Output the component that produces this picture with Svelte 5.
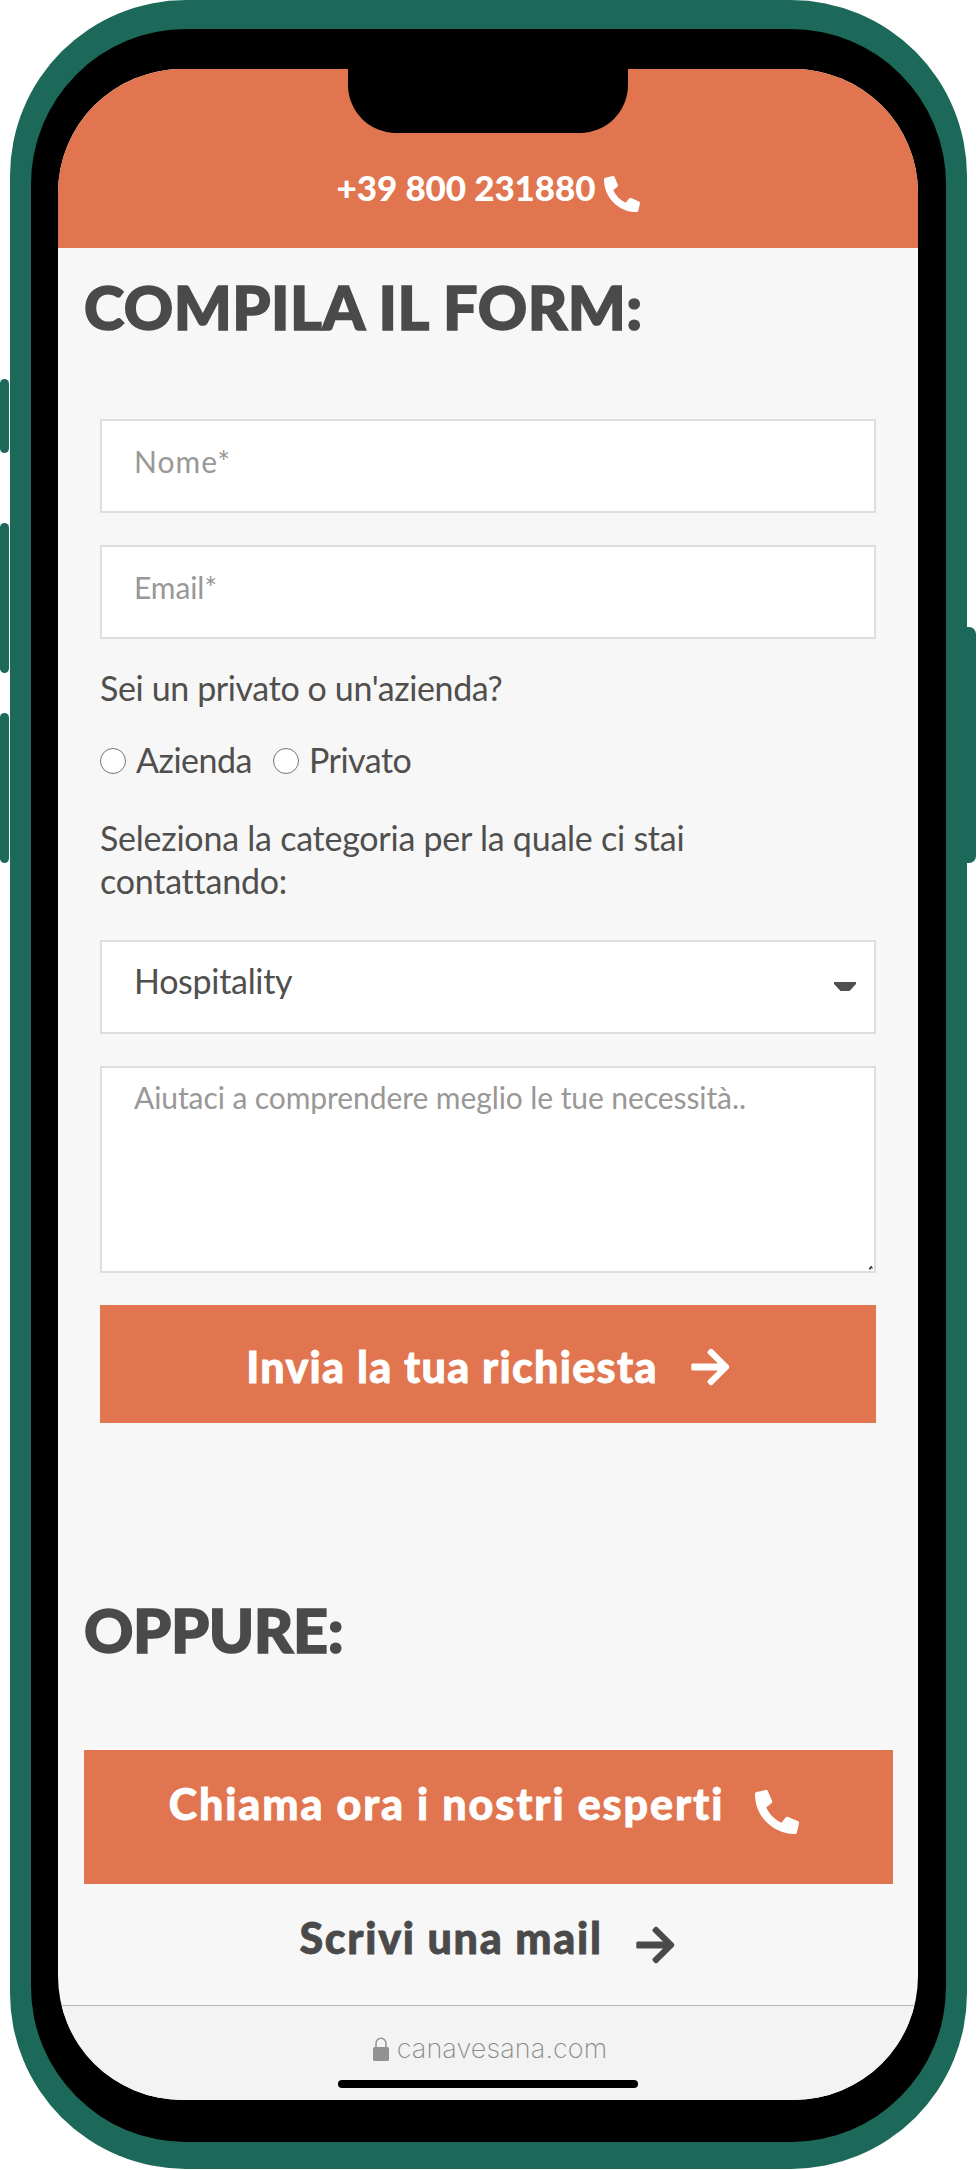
<script lang="ts">
	const options = ['Azienda', 'Privato'];
	const keys = ['mute', 'volume-up', 'volume-down', 'power'];

	let kind = '';
	let category = 'Hospitality';
</script>

<svelte:head>
	<title>Canavesana</title>
</svelte:head>

<svg class="sprite" aria-hidden="true">
	<symbol id="phone" viewBox="0 0 512 512">
		<path
			transform="translate(512 0) scale(-1 1)"
			d="M493.4 24.6l-104-24c-11.3-2.6-22.9 3.3-27.5 13.9l-48 112c-4.2 9.8-1.4 21.3 6.9 28l60.6 49.6c-36 76.7-98.9 140.5-177.2 177.2l-49.6-60.6c-6.8-8.3-18.2-11.1-28-6.9l-112 48C3.9 366.5-2 378.1.6 389.4l24 104C27.1 504.2 36.7 512 48 512c256.1 0 464-207.5 464-464 0-11.2-7.7-20.9-18.6-23.4z"
		/>
	</symbol>
	<symbol id="arrow" viewBox="0 0 39 38">
		<path
			d="M1.5 15.5H27L16.8 5.5Q15.8 4.3 16.8 3.2L18.8 1.1Q20 .2 21.2 1.1L37.8 17.6Q39 19 37.8 20.4L21.2 36.9Q20 37.8 18.8 36.9L16.8 34.8Q15.8 33.7 16.8 32.5L27 22.5H1.5Q.3 22.5 .3 21V17Q.3 15.5 1.5 15.5Z"
			fill="currentColor"
		/>
	</symbol>
</svg>

<div class="device">
	{#each keys as key}
		<i class="key {key}"></i>
	{/each}

	<div class="bezel">
		<div class="notch"></div>

		<div class="screen">
			<header>
				<a href="tel:+39800231880">+39 800 231880</a>
				<svg class="icon"><use href="#phone" /></svg>
			</header>

			<main>
				<h2>COMPILA IL FORM:</h2>

				<form on:submit|preventDefault>
					<input class="name" type="text" placeholder="Nome*" />
					<input type="text" placeholder="Email*" />

					<p class="question">Sei un privato o un'azienda?</p>
					<div class="radios">
						{#each options as option}
							<label>
								<input type="radio" name="kind" value={option} bind:group={kind} />
								<span>{option}</span>
							</label>
						{/each}
					</div>

					<p class="category">Seleziona la categoria per la quale ci stai contattando:</p>
					<div class="select">
						<select bind:value={category}>
							<option>Hospitality</option>
						</select>
						<svg class="caret" viewBox="0 0 22 9"><path d="M0 0H22V2L15.5 9H6.5L0 2Z" /></svg>
					</div>

					<div class="message">
						<textarea placeholder="Aiutaci a comprendere meglio le tue necessità.."></textarea>
						<svg class="grip" viewBox="0 0 4 4"><path d="M2 0H3V1.5H4V2.5H2V3.5H0V2Z" /></svg>
					</div>

					<button class="submit">
						<span>Invia la tua richiesta</span>
						<svg class="arrow"><use href="#arrow" /></svg>
					</button>
				</form>

				<h2 class="or">OPPURE:</h2>

				<a class="call" href="tel:+39800231880">
					<span>Chiama ora i nostri esperti</span>
					<svg class="icon"><use href="#phone" /></svg>
				</a>
				<a class="mail" href="mailto:">
					<span>Scrivi una mail</span>
					<svg class="arrow"><use href="#arrow" /></svg>
				</a>
			</main>

			<footer>
				<div class="address">
					<svg class="lock" viewBox="0 0 16 24">
						<path d="M3 11V6.5a5 5.3 0 0 1 10 0V11" fill="none" stroke="#929292" stroke-width="1.5" />
						<rect y="10" width="16" height="14" rx="1.6" fill="#929292" />
					</svg>
					<span>canavesana.com</span>
				</div>
				<div class="home"></div>
			</footer>
		</div>
	</div>
</div>

<style>
	:global(body) {
		margin: 0;
		background: #fff;
	}

	* {
		box-sizing: border-box;
	}

	.sprite {
		position: absolute;
		width: 0;
		height: 0;
	}

	.device {
		--orange: #e07550;
		--green: #1c6859;
		--dark: #4a4a4a;

		position: relative;
		width: 957px;
		height: 2169px;
		margin-left: 10px;
		padding: 29px 21px 27px;
		border-radius: 176px;
		background: var(--green);
		font-family: Lato, 'Open Sans', sans-serif;
		color: #504f4d;
	}

	.key {
		position: absolute;
		left: -10px;
		width: 9px;
		border-radius: 5px;
		background: var(--green);
	}

	.mute {
		top: 379px;
		height: 74px;
	}

	.volume-up {
		top: 523px;
		height: 150px;
	}

	.volume-down {
		top: 713px;
		height: 150px;
	}

	.power {
		top: 627px;
		left: auto;
		right: -9px;
		width: 12px;
		height: 236px;
		border-radius: 0 7px 7px 0;
	}

	.bezel {
		position: relative;
		height: 100%;
		padding: 40px 28px 42px 27px;
		border-radius: 155px;
		background: #000;
	}

	.notch {
		position: absolute;
		top: 39px;
		left: 317px;
		width: 280px;
		height: 65px;
		border-radius: 0 0 48px 48px;
		background: #000;
	}

	.screen {
		display: flex;
		flex-direction: column;
		height: 100%;
		border-radius: 124px;
		background: #f7f7f7;
		overflow: hidden;
	}

	header {
		display: flex;
		justify-content: center;
		gap: 9px;
		height: 179px;
		padding: 98px 0 0 1px;
		background: var(--orange);
		font-size: 35px;
		font-weight: 900;
		line-height: 40px;
		color: #fff;
	}

	header a {
		letter-spacing: -0.1px;
		color: inherit;
		text-decoration: none;
	}

	.icon {
		width: 36px;
		height: 36px;
		margin-top: 9px;
		fill: #fff;
	}

	main {
		display: flex;
		flex-direction: column;
		padding: 23px 25px 0 26px;
	}

	h2 {
		margin: 0 0 76px;
		font-size: 61px;
		font-weight: 900;
		line-height: 72px;
		letter-spacing: 0.5px;
		color: var(--dark);
		-webkit-text-stroke: 1.6px var(--dark);
	}

	form {
		display: flex;
		flex-direction: column;
		margin: 0 17px 0 16px;
	}

	input[type='text'],
	select,
	textarea {
		display: block;
		width: 100%;
		height: 94px;
		margin: 0;
		padding: 0 32px 11px;
		border: 2px solid #dedede;
		border-radius: 0;
		outline: none;
		background: #fff;
		font: 30px/36px Lato, 'Open Sans', sans-serif;
		letter-spacing: -0.08px;
		color: #504f4d;
	}

	input[type='text'] + input[type='text'] {
		margin-top: 32px;
	}

	input.name {
		letter-spacing: 1px;
	}

	::placeholder {
		color: #999896;
		opacity: 1;
	}

	p {
		margin: 0;
		font-size: 34px;
		line-height: 43px;
		letter-spacing: -0.24px;
	}

	.question {
		margin-top: 27px;
		letter-spacing: -0.38px;
	}

	.radios {
		display: flex;
		gap: 21px;
		height: 42px;
		margin: 31px 0 34px;
	}

	.radios label {
		display: flex;
		align-items: center;
		gap: 10px;
		font-size: 34px;
		line-height: 40px;
		letter-spacing: -0.5px;
	}

	.radios span {
		margin-top: -2px;
	}

	input[type='radio'] {
		appearance: none;
		width: 26px;
		height: 26px;
		margin: 0;
		border: 1.5px solid #767676;
		border-radius: 50%;
		background: #fff;
	}

	input[type='radio']:checked {
		border-width: 8px;
	}

	.category {
		width: 640px;
	}

	.select,
	.message {
		position: relative;
	}

	.select {
		margin-top: 38px;
	}

	select {
		appearance: none;
		padding-bottom: 12px;
		font-size: 34px;
		letter-spacing: -0.3px;
	}

	.caret {
		position: absolute;
		top: 42px;
		right: 20px;
		width: 22px;
		height: 9px;
		fill: #504f4d;
	}

	.message {
		margin: 32px 0;
	}

	textarea {
		height: 207px;
		padding-top: 11px;
		resize: none;
	}

	.grip {
		position: absolute;
		right: 3px;
		bottom: 3px;
		width: 4px;
		height: 4px;
		fill: #444;
	}

	.submit,
	.call,
	.mail {
		display: flex;
		align-items: center;
		justify-content: center;
		border: 0;
		font: 900 43px/52px Lato, 'Open Sans', sans-serif;
		color: #fff;
		text-decoration: none;
		white-space: nowrap;
	}

	.submit span,
	.call span,
	.mail span {
		-webkit-text-stroke: 0.8px currentColor;
	}

	.submit {
		gap: 33px;
		height: 118px;
		padding: 6px 0 0;
		background: var(--orange);
		letter-spacing: 1.3px;
	}

	.arrow {
		width: 39px;
		height: 38px;
	}

	.or {
		margin: 171px 0 84px;
		letter-spacing: -0.4px;
	}

	.call {
		gap: 31px;
		height: 134px;
		padding: 0 9px 26px 0;
		background: var(--orange);
		letter-spacing: 1.9px;
	}

	.call .icon {
		width: 44px;
		height: 44px;
		margin-top: 16px;
	}

	.mail {
		gap: 33px;
		margin-top: 28px;
		padding-right: 3px;
		letter-spacing: 1.7px;
		color: var(--dark);
	}

	.mail .arrow {
		margin-top: 14px;
	}

	footer {
		display: flex;
		flex-direction: column;
		align-items: center;
		height: 95px;
		margin-top: auto;
		border-top: 1px solid #b4b4b4;
		background: #f3f3f3;
	}

	.address {
		display: flex;
		align-items: center;
		gap: 8px;
		height: 34px;
		margin: 26px 0 0 4px;
		font: 200 27px/34px Inter, 'Liberation Sans', sans-serif;
		letter-spacing: 0.1px;
		color: #8a8a8a;
	}

	.lock {
		width: 16px;
		height: 24px;
	}

	.home {
		width: 300px;
		height: 8px;
		margin-top: 14px;
		border-radius: 4px;
		background: #000;
	}
</style>
